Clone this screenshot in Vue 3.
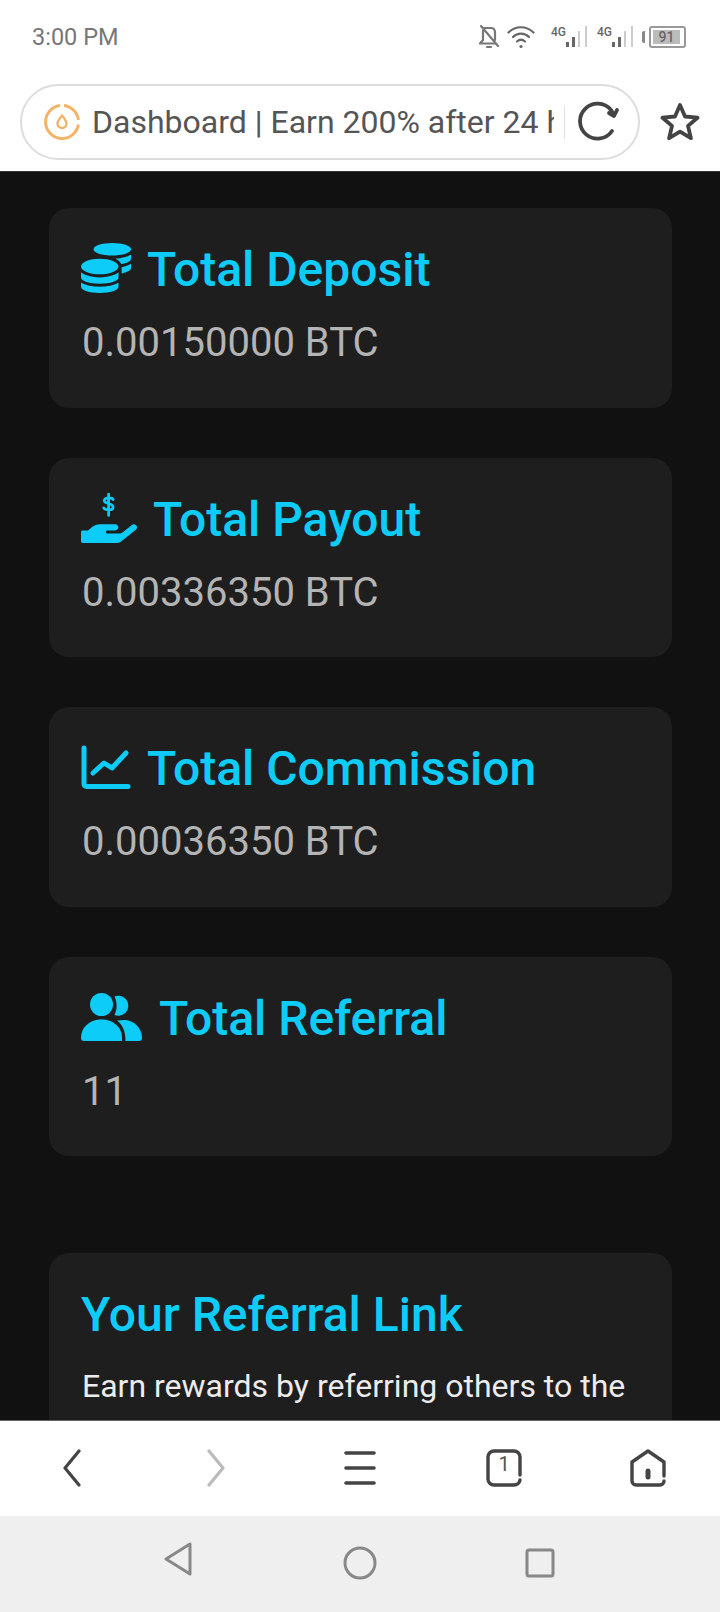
<template>
  <div class="phone">
    <header class="chrome">
      <div class="status">
        <span class="time">3:00 PM</span>
        <div class="status-icons">
          <svg class="ic-bell" width="22" height="24" viewBox="0 0 22 24" fill="none" stroke="#777" stroke-width="2.2" stroke-linecap="round" stroke-linejoin="round">
            <path d="M5 5.5V15l-3 3.5h15" />
            <path d="M6 3h7c2.500 0 4 2 4 4.500V15" />
            <path d="M3 1l17 20" />
            <path d="M9 22h4" />
          </svg>
          <svg class="ic-wifi" width="28" height="24" viewBox="0 0 28 24" fill="none" stroke="#666" stroke-width="2.2" stroke-linecap="round">
            <path d="M1.500 7.500C8.500 .5 19.500 .5 26.500 7.500" />
            <path d="M6 12c4.500-4.500 11.500-4.500 16 0" />
            <path d="M10 16.500c2.500-2.200 5.500-2.200 8 0" />
            <circle cx="14" cy="21.500" r="1.600" fill="#666" stroke="none" />
          </svg>
          <div class="signal" v-for="n in 2" :key="n">
            <span class="net">4G</span>
            <svg width="22" height="22" viewBox="0 0 22 22">
              <rect x="0" y="16" width="3" height="5" fill="#666" />
              <rect x="6" y="11" width="3" height="10" fill="#666" />
              <rect x="12" y="5" width="2" height="16" fill="#ccc" />
              <rect x="19" y="0" width="2" height="21" fill="#ccc" />
            </svg>
          </div>
          <div class="battery">
            <span class="batt-cap"></span>
            <div class="batt-body"><div class="batt-fill">91</div></div>
          </div>
        </div>
      </div>
      <div class="address">
        <div class="pill">
          <svg class="logo" width="38" height="38" viewBox="0 0 38 38" fill="none" stroke="#f2b469" stroke-width="3">
            <path d="M21 2.600A16.500 16.500 0 0 1 35.400 17" />
            <path d="M35.400 21.500A16.500 16.500 0 1 1 17 2.600" />
            <path d="M19 12.500c-2.500 3-4.500 5.500-4.500 8a4.500 4.500 0 0 0 9 0c0-2.500-2-5-4.500-8z" stroke-width="2.400" stroke-linejoin="round" />
          </svg>
          <span class="url-title">Dashboard | Earn 200% after 24 hours</span>
          <span class="url-sep"></span>
          <svg class="reload" width="44" height="42" viewBox="0 0 44 42" fill="none" stroke="#444" stroke-width="3.800" stroke-linecap="round" stroke-linejoin="round">
            <path d="M34 30a17.500 17.500 0 1 1-1-21l3 5" />
            <path d="M39 9l-3 6-5-3" />
          </svg>
        </div>
        <svg class="star" width="40" height="40" viewBox="0 0 40 40" fill="none" stroke="#444" stroke-width="3.800" stroke-linejoin="round">
          <path d="M20 3l5 11.500 12.500 1.200-9.500 8.200 2.900 12.300L20 29.700 9.100 36.200 12 23.900 2.500 15.700 15 14.500z" />
        </svg>
      </div>
    </header>

    <main class="web">
      <section class="card" v-for="s in stats" :key="s.title">
        <h3 class="stat-title">
          <svg v-if="s.icon === 'coins'" class="icon" width="50" height="50" viewBox="0 0 512 512" fill="currentColor">
            <path d="M0 405.300V448c0 35.300 86 64 192 64s192-28.700 192-64v-42.700C342.700 434.400 267.200 448 192 448S41.300 434.400 0 405.300zM320 128c106 0 192-28.700 192-64S426 0 320 0 128 28.700 128 64s86 64 192 64zM0 300.400V352c0 35.300 86 64 192 64s192-28.700 192-64v-51.600c-41.300 34-116.900 51.600-192 51.600S41.300 334.400 0 300.400zm416 11c57.300-11.100 96-31.700 96-55.400v-42.700c-23.200 16.400-57.300 27.600-96 34.500v63.600zM192 160C86 160 0 195.800 0 240s86 80 192 80 192-35.800 192-80-86-80-192-80zm219.300 56.300c60-10.800 100.700-32 100.700-56.300v-42.700c-35.500 25.100-96.500 38.600-160.700 41.800 29.500 14.300 51.200 33.500 60 57.200z" />
          </svg>
          <svg v-else-if="s.icon === 'hand'" class="icon" width="56" height="50" viewBox="0 0 576 512" fill="currentColor">
            <path d="M565.300 328.100c-11.800-10.700-30.200-10-42.600 0L430.300 402c-11.300 9.100-25.400 14-40 14H272c-8.800 0-16-7.200-16-16s7.200-16 16-16h78.300c15.900 0 30.700-10.900 33.300-26.600 3.300-20-12.100-37.400-31.600-37.400H192c-27 0-53.100 9.300-74.100 26.300L71.400 384H16c-8.800 0-16 7.200-16 16v96c0 8.800 7.200 16 16 16h356.800c14.500 0 28.600-4.900 40-14L564 377c15.200-12.100 16.400-35.300 1.300-48.900z" />
            <path d="M330 66c-10-20-84-26-90 10-5 34 90 24 90 70 0 38-82 32-96 6M284 8v222" fill="none" stroke="currentColor" stroke-width="28" stroke-linecap="round" />
          </svg>
          <svg v-else-if="s.icon === 'chart'" class="icon" width="50" height="50" viewBox="0 0 50 50" fill="none" stroke="currentColor" stroke-width="5" stroke-linecap="round" stroke-linejoin="round">
            <path d="M3 6v36a2.500 2.500 0 0 0 2.500 2.500H47" />
            <path d="M12 31l11-10 8 5 14-15" />
          </svg>
          <svg v-else class="icon" width="62" height="50" viewBox="0 0 62 50" fill="currentColor">
            <circle cx="20.500" cy="12.500" r="11.500" />
            <path d="M33.500 4.500a10 10 0 1 1 0 18.500c2.800-5.500 2.800-13 0-18.500z" />
            <path d="M3 49a3 3 0 0 1-3-3C0 35 9 27.500 20.500 27.500S41 35 41 46v3z" />
            <path d="M36 28.500c5 3.500 8.500 10 8.500 20.500H58a3 3 0 0 0 3-3c0-10-8-18-18-18z" />
          </svg>
          <span class="title-text">{{ s.title }}</span>
        </h3>
        <p class="stat-value">{{ s.value }}</p>
      </section>

      <section class="card referral">
        <h3 class="stat-title"><span class="title-text">Your Referral Link</span></h3>
        <p class="ref-text">Earn rewards by referring others to the</p>
      </section>
    </main>

    <nav class="toolbar">
      <div class="tool">
        <svg width="20" height="38" viewBox="0 0 20 38" fill="none" stroke="#444" stroke-width="3.200" stroke-linecap="round" stroke-linejoin="round"><path d="M17 2L3 19l14 17" /></svg>
      </div>
      <div class="tool">
        <svg width="20" height="38" viewBox="0 0 20 38" fill="none" stroke="#bbb" stroke-width="3.200" stroke-linecap="round" stroke-linejoin="round"><path d="M3 2l14 17L3 36" /></svg>
      </div>
      <div class="tool">
        <svg width="32" height="36" viewBox="0 0 32 36" fill="none" stroke="#444" stroke-width="3.600" stroke-linecap="round"><path d="M2 3h28M2 18h28M2 33h28" /></svg>
      </div>
      <div class="tool tabs">
        <svg width="36" height="38" viewBox="0 0 36 38" fill="none" stroke="#444" stroke-width="3.400" stroke-linecap="round"><path d="M34 26v-18a6 6 0 0 0-6-6H8a6 6 0 0 0-6 6v22a6 6 0 0 0 6 6h20a6 6 0 0 0 6-5" /></svg>
        <span class="tab-count">1</span>
      </div>
      <div class="tool">
        <svg width="36" height="38" viewBox="0 0 36 38" fill="none" stroke="#444" stroke-width="3.400" stroke-linecap="round" stroke-linejoin="round">
          <path d="M34 27V13L18 2 2 13v19a4 4 0 0 0 4 4h24a4 4 0 0 0 4-4" />
          <path d="M18 22v6" stroke-width="5" />
        </svg>
      </div>
    </nav>

    <nav class="sysnav">
      <svg class="sys-back" width="28" height="34" viewBox="0 0 28 34" fill="none" stroke="#888" stroke-width="3" stroke-linejoin="round"><path d="M26 2v30L2 17z" /></svg>
      <svg class="sys-home" width="34" height="34" viewBox="0 0 34 34" fill="none" stroke="#888" stroke-width="3"><circle cx="17" cy="17" r="15" /></svg>
      <svg class="sys-home" width="30" height="30" viewBox="0 0 30 30" fill="none" stroke="#888" stroke-width="3" stroke-linejoin="round"><rect x="2" y="2" width="26" height="26" rx="2" /></svg>
    </nav>
  </div>
</template>

<script setup>
const stats = [
  { icon: 'coins', title: 'Total Deposit', value: '0.00150000 BTC' },
  { icon: 'hand', title: 'Total Payout', value: '0.00336350 BTC' },
  { icon: 'chart', title: 'Total Commission', value: '0.00036350 BTC' },
  { icon: 'users', title: 'Total Referral', value: '11' }
]
</script>

<style>
html, body {
  margin: 0;
  background: #fff;
}
</style>

<style scoped>
.phone {
  display: flex;
  flex-direction: column;
  width: 720px;
  height: 1612px;
  overflow: hidden;
  font-family: Roboto, "Noto Sans", sans-serif;
}

.chrome {
  flex: none;
  height: 172px;
  background: #fff;
}

.status {
  display: flex;
  align-items: center;
  justify-content: space-between;
  height: 84px;
  padding: 0 34px 10px 32px;
  box-sizing: border-box;
}

.time {
  font-size: 23.5px;
  color: #777;
}

.status-icons {
  display: flex;
  align-items: center;
}

.ic-wifi {
  margin-left: 7px;
}

.signal {
  display: flex;
  align-items: flex-end;
  margin-left: 16px;
}

.signal + .signal {
  margin-left: 9px;
}

.net {
  font-size: 12px;
  font-weight: 500;
  color: #666;
  align-self: flex-start;
  line-height: 12px;
}

.battery {
  display: flex;
  align-items: center;
  margin-left: 8px;
}

.batt-cap {
  width: 3px;
  height: 12px;
  background: #888;
  border-radius: 2px 0 0 2px;
  margin-right: 4px;
}

.batt-body {
  width: 37px;
  height: 22px;
  box-sizing: border-box;
  border: 2px solid #999;
  border-radius: 3px;
  padding: 2px;
}

.batt-fill {
  height: 100%;
  width: 27px;
  background: #bbb;
  font-size: 14px;
  line-height: 14px;
  font-weight: 500;
  color: #666;
  text-align: center;
}

.address {
  display: flex;
  align-items: flex-start;
  padding-left: 20px;
}

.pill {
  display: flex;
  align-items: center;
  width: 620px;
  height: 76px;
  box-sizing: border-box;
  border: 2px solid #ddd;
  border-radius: 38px;
  padding: 0 16px 0 21px;
}

.logo {
  flex: none;
}

.url-title {
  flex: 1;
  min-width: 0;
  margin-left: 11px;
  font-size: 32px;
  color: #555;
  white-space: nowrap;
  overflow: hidden;
}

.url-sep {
  flex: none;
  width: 1px;
  height: 34px;
  margin: 0 13px 0 10px;
  background: #e2e2e2;
}

.reload {
  flex: none;
}

.star {
  flex: none;
  margin: 18px 0 0 20px;
}

.web {
  flex: 1;
  min-height: 0;
  overflow: hidden;
  background: #111;
  padding: 36px 48px 0 49px;
  border-top: 1px solid #333;
  margin-top: -1px;
}

.card {
  height: 199.6px;
  box-sizing: border-box;
  margin-bottom: 50px;
  padding: 30px 32px;
  background: #1e1e1e;
  border-radius: 20px;
}

.referral {
  margin-top: 97px;
}

.stat-title {
  display: flex;
  align-items: center;
  gap: 16px;
  margin: 0;
  height: 60px;
  font-size: 48px;
  font-weight: 500;
  color: #0dcdf8;
}

.icon {
  flex: none;
}

.title-text {
  padding-top: 3px;
}

.stat-value {
  margin: 23px 0 0 1px;
  font-size: 40px;
  line-height: 44px;
  color: #b4b4b4;
}

.ref-text {
  margin: 20px 0 0 1px;
  font-size: 32px;
  line-height: 46px;
  color: #ececec;
}

.toolbar {
  flex: none;
  display: grid;
  grid-template-columns: repeat(5, 144px);
  height: 96px;
  background: #fff;
  border-top: 1px solid #666;
  box-sizing: border-box;
}

.tool {
  position: relative;
  display: flex;
  align-items: center;
  justify-content: center;
  padding-bottom: 2px;
}

.tab-count {
  position: absolute;
  left: 0;
  right: 0;
  top: 32px;
  text-align: center;
  font-size: 20px;
  line-height: 22px;
  color: #555;
}

.sysnav {
  flex: none;
  display: grid;
  grid-template-columns: repeat(3, 180px);
  justify-content: center;
  justify-items: center;
  align-items: center;
  height: 96px;
  background: #efefef;
  padding-bottom: 10px;
  box-sizing: border-box;
}

.sys-back {
  margin-right: 5px;
}

.sys-home {
  margin-top: 8px;
}
</style>
